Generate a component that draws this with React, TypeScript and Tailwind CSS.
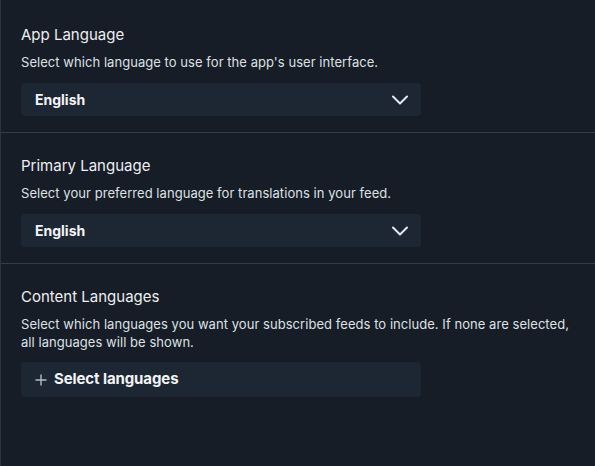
type LangSelectProps = { value: string };

function LangSelect({ value }: LangSelectProps) {
  return (
    <button className="mt-3 flex h-[33px] w-[400px] items-center justify-between rounded bg-[#1d2733] pl-[14px] pr-[13px] text-left">
      <span className="text-[14px] font-bold text-[#f3f4f6]">{value}</span>
      <svg width="16" height="10" viewBox="0 0 16 10" fill="none" className="text-[#e5e7eb]">
        <path d="M1 1.5 8 8.5 15 1.5" stroke="currentColor" strokeWidth="2" strokeLinecap="round" strokeLinejoin="round" />
      </svg>
    </button>
  );
}

export default function App() {
  return (
    <main
      className="min-h-[466px] w-full border-l border-[#2b323c] bg-[#171d26] text-[#eceef1]"
      style={{ fontFamily: 'Inter, "Noto Sans", sans-serif' }}
    >
      {/* App-Sprache */}
      <section className="border-b border-[#343c48] px-5 pb-4 pt-[25px]">
        <h2 className="text-[15px] leading-5">App Language</h2>
        <p className="mt-2 text-[13px] leading-[18px] tracking-[0.05px] text-[#dde0e5]">
          Select which language to use for the app's user interface.
        </p>
        <LangSelect value="English" />
      </section>

      {/* Primärsprache */}
      <section className="border-b border-[#343c48] px-5 pb-4 pt-[23px]">
        <h2 className="text-[15px] leading-5">Primary Language</h2>
        <p className="mt-2 text-[13px] leading-[18px] tracking-[0.05px] text-[#dde0e5]">
          Select your preferred language for translations in your feed.
        </p>
        <LangSelect value="English" />
      </section>

      {/* Inhaltssprachen */}
      <section className="px-5 pb-4 pt-[23px]">
        <h2 className="text-[15px] leading-5">Content Languages</h2>
        <p className="mt-2 text-[13px] leading-[18px] tracking-[0.05px] text-[#dde0e5]">
          Select which languages you want your subscribed feeds to include. If none are selected, all languages will be shown.
        </p>
        <button className="mt-[11px] flex h-[35px] w-[400px] items-center gap-[7px] rounded bg-[#1d2733] pl-[14px] text-left">
          <svg width="12" height="12" viewBox="0 0 12 12" fill="none" className="text-[#b4bac3]">
            <path d="M6 0.5v11M0.5 6h11" stroke="currentColor" strokeWidth="1.4" />
          </svg>
          <span className="text-[15px] font-bold tracking-[-0.1px] text-[#f3f4f6]">Select languages</span>
        </button>
      </section>
    </main>
  );
}
